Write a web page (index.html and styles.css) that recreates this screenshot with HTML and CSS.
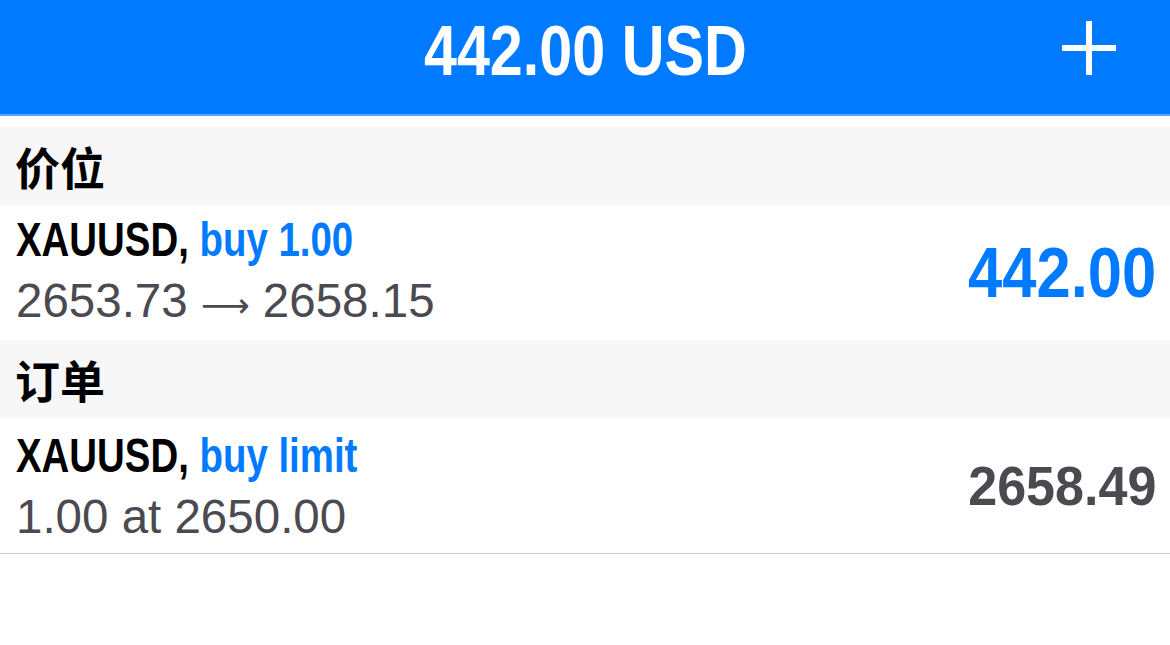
FILE: index.html
```html
<!DOCTYPE html>
<html lang="zh">
  <head>
    <meta charset="utf-8" />
    <meta name="viewport" content="width=device-width, initial-scale=1.0" />
    <title>Trade</title>
    <link rel="stylesheet" href="styles.css">
  </head>
  <body>
    <header class="topbar">
      <div class="topbar-side"></div>
      <h1 class="balance">442.00 USD</h1>
      <div class="topbar-side topbar-right">
        <button class="add-button" aria-label="add">
          <svg width="54" height="54" viewBox="0 0 54 54">
            <rect x="24" y="0" width="6" height="54" fill="#fff" />
            <rect x="0" y="24" width="54" height="6" fill="#fff" />
          </svg>
        </button>
      </div>
    </header>

    <section class="group">
      <div class="group-title">价位</div>
      <div class="row">
        <div class="row-info">
          <div class="row-name"><span class="cond">XAUUSD, <span class="accent">buy 1.00</span></span></div>
          <div class="row-detail">2653.73 <span class="arrow">⟶</span> 2658.15</div>
        </div>
        <div class="row-value profit">442.00</div>
      </div>
    </section>

    <section class="group">
      <div class="group-title">订单</div>
      <div class="row row-last">
        <div class="row-info">
          <div class="row-name"><span class="cond">XAUUSD, <span class="accent">buy limit</span></span></div>
          <div class="row-detail">1.00 at 2650.00</div>
        </div>
        <div class="row-value price">2658.49</div>
      </div>
    </section>
  </body>
</html>
```

FILE: styles.css
```css
* {
  padding: 0;
  margin: 0;
  box-sizing: border-box;
}
body {
  width: 1170px;
  height: 645px;
  background-color: #ffffff;
  font-family: "Liberation Sans", Arial, "Noto Sans CJK SC", sans-serif;
  overflow: hidden;
}
.topbar {
  display: grid;
  grid-template-columns: 1fr auto 1fr;
  align-items: center;
  height: 116px;
  padding: 2px 0 16px 0;
  background-color: #007aff;
  border-bottom: 2px solid #5ea6f7;
  margin-bottom: 11px;
}
.balance {
  color: #ffffff;
  font-size: 71px;
  font-weight: 700;
  line-height: 98px;
  transform: scaleX(0.835);
  white-space: nowrap;
}
.topbar-right {
  display: flex;
  justify-content: flex-end;
  padding-right: 54px;
}
.add-button {
  display: flex;
  border: none;
  background: none;
  margin-bottom: 6px;
  cursor: pointer;
}
.group-title {
  height: 78px;
  display: flex;
  align-items: center;
  padding-left: 15px;
  background-color: #f7f7f7;
  font-family: "Noto Sans CJK SC", sans-serif;
  font-size: 45px;
  font-weight: 700;
  color: #000000;
}
.row {
  height: 135px;
  display: flex;
  align-items: center;
  justify-content: space-between;
  padding: 0 14px 0 16px;
  background-color: #ffffff;
}
.row-last {
  height: 136px;
  border-bottom: 1px solid #c8c7cc;
}
.row-name {
  font-size: 48px;
  font-weight: 700;
  line-height: 61px;
  color: #000000;
  white-space: nowrap;
}
.cond {
  display: inline-block;
  transform: scaleX(0.8);
  transform-origin: left center;
}
.accent {
  color: #007aff;
}
.row-detail {
  font-size: 47.5px;
  line-height: 61px;
  color: #4a4a50;
  white-space: nowrap;
}
.arrow {
  font-family: "DejaVu Sans", sans-serif;
  font-size: 34px;
}
.row-value {
  font-weight: 700;
  white-space: nowrap;
  transform-origin: right center;
}
.profit {
  font-size: 71px;
  color: #007aff;
  transform: scaleX(0.866);
}
.price {
  font-size: 56px;
  color: #4a4a50;
  transform: scaleX(0.93);
}
```
